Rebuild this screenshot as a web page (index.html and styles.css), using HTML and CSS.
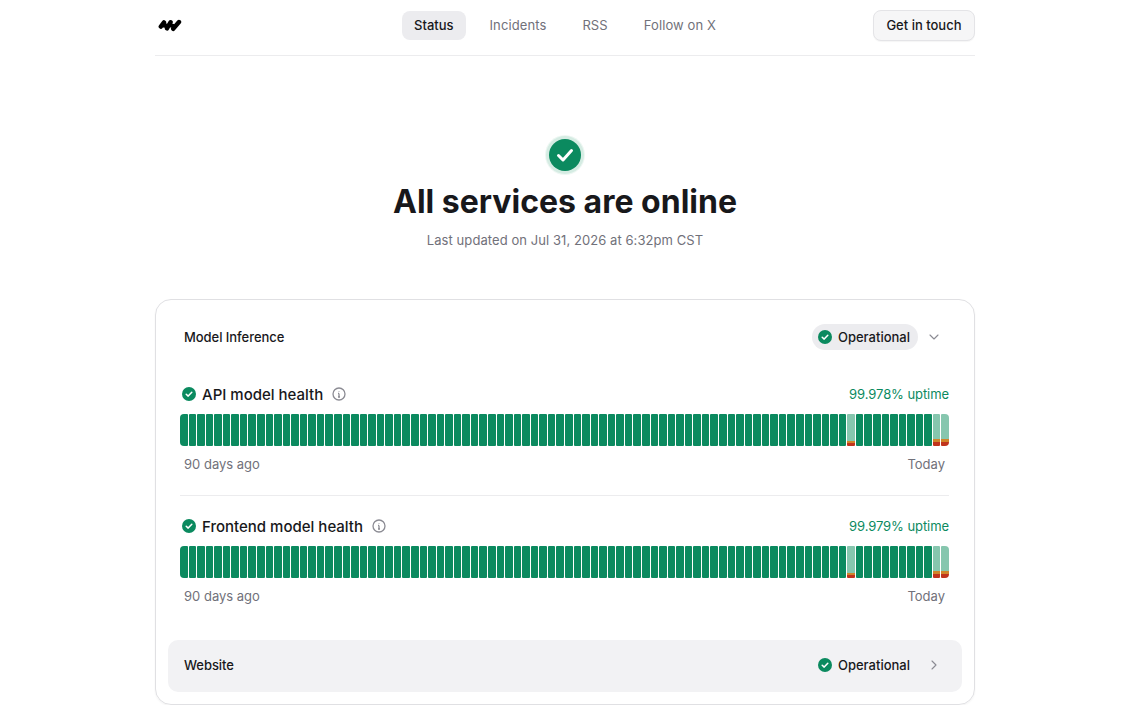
FILE: index.html
```html
<!DOCTYPE html>
<html lang="en">
<head>
    <meta charset="UTF-8">
    <title>Status</title>
    <link rel="stylesheet" href="styles.css">
</head>
<body>
    <div class="page">
        <header class="top">
            <a class="logo">
                <svg width="24" height="13" viewBox="0 0 24 13"><path d="M2.8 7.6 L6 3.4 M9 9.4 L12.6 3.2 M15.2 9.8 L21 3 M5 6 L9 7 M11.5 6 L15.2 7" fill="none" stroke="#000" stroke-width="4.4" stroke-linecap="round"/></svg>
            </a>
            <nav class="top-nav">
                <a class="nav-item active">Status</a>
                <a class="nav-item">Incidents</a>
                <a class="nav-item">RSS</a>
                <a class="nav-item">Follow on X</a>
            </nav>
            <a class="btn">Get in touch</a>
        </header>

        <section class="hero">
            <div class="hero-icon">
                <svg width="32" height="32" viewBox="0 0 32 32"><circle cx="16" cy="16" r="16" fill="#0b8a5f"/><path d="M9.5 16.5 L14 21 L22.5 11.5" fill="none" stroke="#fff" stroke-width="3" stroke-linecap="round" stroke-linejoin="round"/></svg>
            </div>
            <h1>All services are online</h1>
            <p class="updated">Last updated on Jul 31, 2026 at 6:32pm CST</p>
        </section>

        <section class="card">
            <div class="group-head">
                <span class="group-name">Model Inference</span>
                <span class="pill">
                    <svg class="check" viewBox="0 0 14 14"><circle cx="7" cy="7" r="7"/><path d="M4.2 7.2 L6.2 9.1 L9.8 5.2"/></svg>
                    Operational
                </span>
                <svg class="caret" viewBox="0 0 10 10"><path d="M1 3 L5 7 L9 3"/></svg>
            </div>

            <div class="service">
                <div class="service-head">
                    <svg class="check" viewBox="0 0 14 14"><circle cx="7" cy="7" r="7"/><path d="M4.2 7.2 L6.2 9.1 L9.8 5.2"/></svg>
                    <span class="service-name">API model health</span>
                    <svg class="info" viewBox="0 0 14 14"><circle cx="7" cy="7" r="6"/><path d="M7 6.4 V10 M6 6.4 H7 M6 10 H8"/><path d="M7 4 V4.4"/></svg>
                    <span class="uptime">99.978% uptime</span>
                </div>
                <div class="bars"></div>
                <div class="range"><span>90 days ago</span><span>Today</span></div>
            </div>

            <hr class="sep">

            <div class="service">
                <div class="service-head">
                    <svg class="check" viewBox="0 0 14 14"><circle cx="7" cy="7" r="7"/><path d="M4.2 7.2 L6.2 9.1 L9.8 5.2"/></svg>
                    <span class="service-name">Frontend model health</span>
                    <svg class="info" viewBox="0 0 14 14"><circle cx="7" cy="7" r="6"/><path d="M7 6.4 V10 M6 6.4 H7 M6 10 H8"/><path d="M7 4 V4.4"/></svg>
                    <span class="uptime">99.979% uptime</span>
                </div>
                <div class="bars"></div>
                <div class="range"><span>90 days ago</span><span>Today</span></div>
            </div>

            <div class="group-row">
                <span class="group-name">Website</span>
                <span class="pill plain">
                    <svg class="check" viewBox="0 0 14 14"><circle cx="7" cy="7" r="7"/><path d="M4.2 7.2 L6.2 9.1 L9.8 5.2"/></svg>
                    Operational
                </span>
                <svg class="caret" viewBox="0 0 10 10"><path d="M3 1 L7 5 L3 9"/></svg>
            </div>
        </section>
    </div>
    <script src="bars.js"></script>
</body>
</html>
```
FILE: styles.css
```css
*{
    box-sizing: border-box;
}

body{
    margin: 0;
    padding-left: 4px;
    background-color: #fff;
    color: #18181b;
    font-family: Inter, "Liberation Sans", sans-serif;
    font-size: 13px;
}

.page{
    width: 820px;
    margin: 0 auto;
}

.top{
    display: grid;
    grid-template-columns: 1fr auto 1fr;
    align-items: center;
    height: 56px;
    padding-bottom: 4px;
    border-bottom: 1px solid #ececee;
}

.logo{
    display: flex;
    width: 24px;
    margin-left: 3px;
}

.top-nav{
    display: flex;
    gap: 12px;
}

.nav-item{
    padding: 0 12px;
    height: 29px;
    line-height: 29px;
    border-radius: 8px;
    color: #71717a;
    letter-spacing: 0.1px;
}

.nav-item.active{
    background-color: #ececef;
    color: #18181b;
    font-weight: 450;
    letter-spacing: 0;
}

.btn{
    justify-self: end;
    height: 31px;
    line-height: 29px;
    padding: 0 12.5px;
    border: 1px solid #e4e4e7;
    border-radius: 8px;
    background-color: #f6f6f7;
    font-weight: 450;
    box-shadow: 0 1px 1px rgba(0,0,0,.04);
}

.hero{
    display: flex;
    flex-direction: column;
    align-items: center;
    padding-top: 80px;
    height: 243px;
}

.hero-icon{
    display: flex;
    padding: 3px;
    border-radius: 50%;
    background-color: #d5ece3;
    box-shadow: 0 0 0 1px #eef7f3;
}

.hero h1{
    margin: 8px 0 0;
    font-size: 32px;
    line-height: 40px;
    font-weight: 700;
}

.updated{
    margin: 10px 0 0;
    color: #71717a;
    line-height: 16px;
    letter-spacing: 0.07px;
}

.card{
    height: 406px;
    padding: 12px;
    border: 1px solid #e0e0e3;
    border-radius: 16px;
    box-shadow: 0 1px 2px rgba(0,0,0,.05);
}

.group-head, .group-row{
    display: flex;
    align-items: center;
    height: 50px;
    padding: 0 23px 0 16px;
}

.group-name{
    flex: 1;
    font-weight: 450;
    letter-spacing: -0.05px;
}

.pill{
    display: flex;
    align-items: center;
    gap: 6px;
    height: 26px;
    padding: 0 8px 0 6px;
    border-radius: 13px;
    background-color: #ececef;
    font-weight: 450;
}

.pill.plain{
    background: none;
}

.check{
    width: 14px;
    height: 14px;
    flex: none;
}

.check circle{
    fill: #0b8a5f;
}

.check path{
    fill: none;
    stroke: #fff;
    stroke-width: 1.5;
    stroke-linecap: round;
    stroke-linejoin: round;
}

.caret{
    width: 10px;
    height: 10px;
    margin-left: 11px;
}

.caret path{
    fill: none;
    stroke: #8b8b93;
    stroke-width: 1.1;
    stroke-linecap: round;
    stroke-linejoin: round;
}

.service{
    padding: 0 13px 0 12px;
}

.service-head{
    display: flex;
    align-items: center;
    height: 24px;
    margin-top: 20px;
    padding-left: 2px;
}

.service-name{
    margin-left: 6px;
    font-size: 15px;
    font-weight: 450;
}

.info{
    width: 14px;
    height: 14px;
    margin-left: 9px;
}

.info circle, .info path{
    fill: none;
    stroke: #8b8b93;
    stroke-width: 1.3;
}

.uptime{
    margin-left: auto;
    color: #0b8a5f;
    letter-spacing: -0.07px;
}

.bars{
    display: grid;
    grid-template-columns: repeat(90, 1fr);
    gap: 1px;
    height: 32px;
    margin-top: 8px;
    border-radius: 4px;
    overflow: hidden;
}

.bar{
    background-color: #0b8a5f;
    border-radius: 1px;
}

.bar.hit{
    background: linear-gradient(#86c6ae 0 25px, #d1852a 25px 28px, #c0341d 28px);
}

.bar.hit-small{
    background: linear-gradient(#86c6ae 0 27px, #d1852a 27px 29px, #c0341d 29px);
}

.range{
    display: flex;
    justify-content: space-between;
    margin-top: 10px;
    padding: 0 4px;
    color: #71717a;
    line-height: 16px;
}

.sep{
    height: 1px;
    margin: 23px 13px 18px 12px;
    border: 0;
    background-color: #ececee;
}

.service + .sep + .service .service-head{
    margin-top: 18px;
}

.group-row{
    height: 52px;
    margin-top: 36px;
    padding-bottom: 2px;
    border-radius: 10px;
    background-color: #f2f2f4;
}
```
FILE: bars.js
```js
// 90 day bars, the last entries are the days with incidents
var hits = {78: 'hit-small', 88: 'hit', 89: 'hit'};
document.querySelectorAll('.bars').forEach(function (row) {
    for (var i = 0; i < 90; i++) {
        var b = document.createElement('span');
        b.className = 'bar' + (hits[i] ? ' ' + hits[i] : '');
        row.appendChild(b);
    }
});
```
